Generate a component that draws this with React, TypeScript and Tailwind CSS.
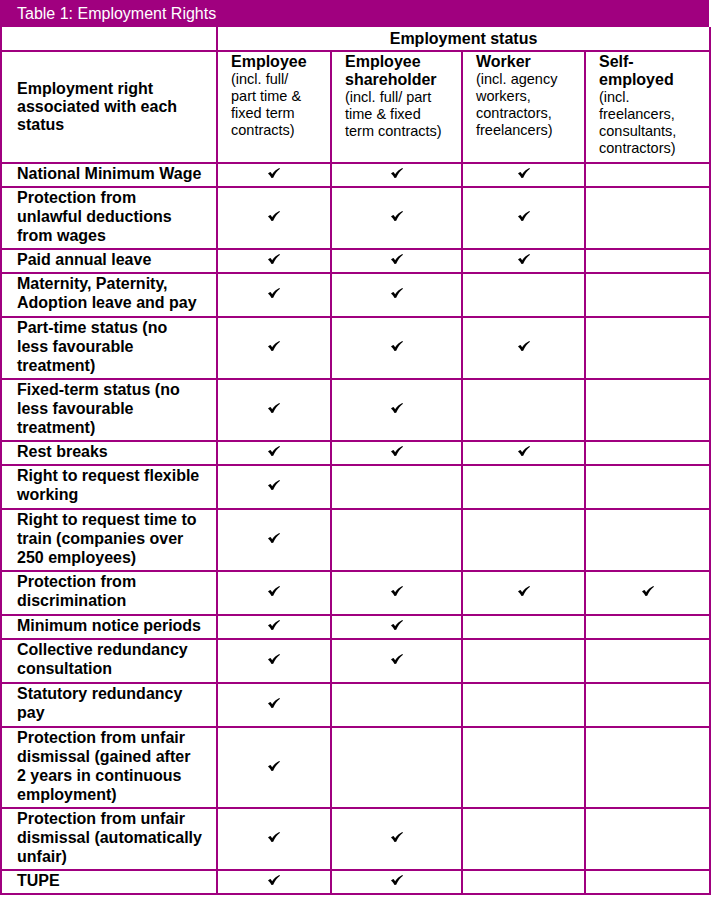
import { Fragment } from "react"

const PURPLE = "border-[#a0007f]"

type Right = {
  label: string[]
  ticks: [boolean, boolean, boolean, boolean]
}

const rights: Right[] = [
  { label: ["National Minimum Wage"], ticks: [true, true, true, false] },
  { label: ["Protection from", "unlawful deductions", "from wages"], ticks: [true, true, true, false] },
  { label: ["Paid annual leave"], ticks: [true, true, true, false] },
  { label: ["Maternity, Paternity,", "Adoption leave and pay"], ticks: [true, true, false, false] },
  { label: ["Part-time status (no", "less favourable", "treatment)"], ticks: [true, true, true, false] },
  { label: ["Fixed-term status (no", "less favourable", "treatment)"], ticks: [true, true, false, false] },
  { label: ["Rest breaks"], ticks: [true, true, true, false] },
  { label: ["Right to request flexible", "working"], ticks: [true, false, false, false] },
  { label: ["Right to request time to", "train (companies over", "250 employees)"], ticks: [true, false, false, false] },
  { label: ["Protection from", "discrimination"], ticks: [true, true, true, true] },
  { label: ["Minimum notice periods"], ticks: [true, true, false, false] },
  { label: ["Collective redundancy", "consultation"], ticks: [true, true, false, false] },
  { label: ["Statutory redundancy", "pay"], ticks: [true, false, false, false] },
  {
    label: ["Protection from unfair", "dismissal (gained after", "2 years in continuous", "employment)"],
    ticks: [true, false, false, false],
  },
  { label: ["Protection from unfair", "dismissal (automatically", "unfair)"], ticks: [true, true, false, false] },
  { label: ["TUPE"], ticks: [true, true, false, false] },
]

const statuses = [
  { title: ["Employee"], note: ["(incl. full/", "part time &", "fixed term", "contracts)"] },
  { title: ["Employee", "shareholder"], note: ["(incl. full/ part", "time & fixed", "term contracts)"] },
  { title: ["Worker"], note: ["(incl. agency", "workers,", "contractors,", "freelancers)"] },
  { title: ["Self-", "employed"], note: ["(incl.", "freelancers,", "consultants,", "contractors)"] },
]

function Lines({ lines }: { lines: string[] }) {
  return (
    <>
      {lines.map((line, i) => (
        <Fragment key={i}>
          {i > 0 && <br />}
          {line}
        </Fragment>
      ))}
    </>
  )
}

// heavy tick, drawn like the Wingdings check in the source document
function Tick() {
  return (
    <svg viewBox="0 0 12 10" className="mx-auto block h-[10px] w-[12px] -translate-y-[2px]" aria-label="yes">
      <path
        d="M0 5.4C0.9 4.6 1.7 4.1 2.5 4C3.1 4.6 3.6 5.4 4.1 6.3C6 3.6 8.5 1.3 11.3 0L12 0.8C9.2 2.9 6.9 5.9 5.2 9.8L3.5 10C2.6 8.2 1.4 6.5 0 5.4Z"
        fill="#000"
      />
    </svg>
  )
}

export default function App() {
  return (
    <div className="w-[709px] bg-white font-['Liberation_Sans',Arial,sans-serif] text-black">
      <div className="h-[27px] bg-[#a0007f] pl-[17px] text-[16px] leading-[27px] text-white">
        Table 1: Employment Rights
      </div>
      <table className="w-full table-fixed border-collapse">
        <colgroup>
          <col className="w-[216px]" />
          <col className="w-[114px]" />
          <col className="w-[131px]" />
          <col className="w-[123px]" />
          <col className="w-[125px]" />
        </colgroup>
        <thead>
          <tr>
            <td className={`border-2 border-t-0 ${PURPLE}`} />
            <th
              colSpan={4}
              className={`border-2 border-t-0 ${PURPLE} pt-[2px] pb-[2px] text-center text-[16px] font-bold leading-[19px]`}
            >
              Employment status
            </th>
          </tr>
          <tr>
            <th
              className={`border-2 ${PURPLE} pl-[15px] pr-2 text-left align-middle text-[16px] font-bold leading-[18px] whitespace-nowrap`}
            >
              <Lines lines={["Employment right", "associated with each", "status"]} />
            </th>
            {statuses.map((s) => (
              <th
                key={s.title.join(" ")}
                className={`border-2 ${PURPLE} pt-[1px] pb-[5px] pl-[13px] pr-1 text-left align-top font-normal whitespace-nowrap`}
              >
                <div className="text-[16px] font-bold leading-[18px]">
                  <Lines lines={s.title} />
                </div>
                <div className="text-[14.5px] leading-[17px]">
                  <Lines lines={s.note} />
                </div>
              </th>
            ))}
          </tr>
        </thead>
        <tbody>
          {rights.map((r) => (
            <tr key={r.label.join(" ")}>
              <td
                className={`border-2 ${PURPLE} pl-[15px] pr-1 pt-0 ${
                  r.label.length === 2 ? "pb-[4px]" : "pb-[3px]"
                } align-top text-[16px] font-bold leading-[19px] whitespace-nowrap`}
              >
                <Lines lines={r.label} />
              </td>
              {r.ticks.map((t, i) => (
                <td key={i} className={`border-2 ${PURPLE} align-middle`}>
                  {t && <Tick />}
                </td>
              ))}
            </tr>
          ))}
        </tbody>
      </table>
    </div>
  )
}
